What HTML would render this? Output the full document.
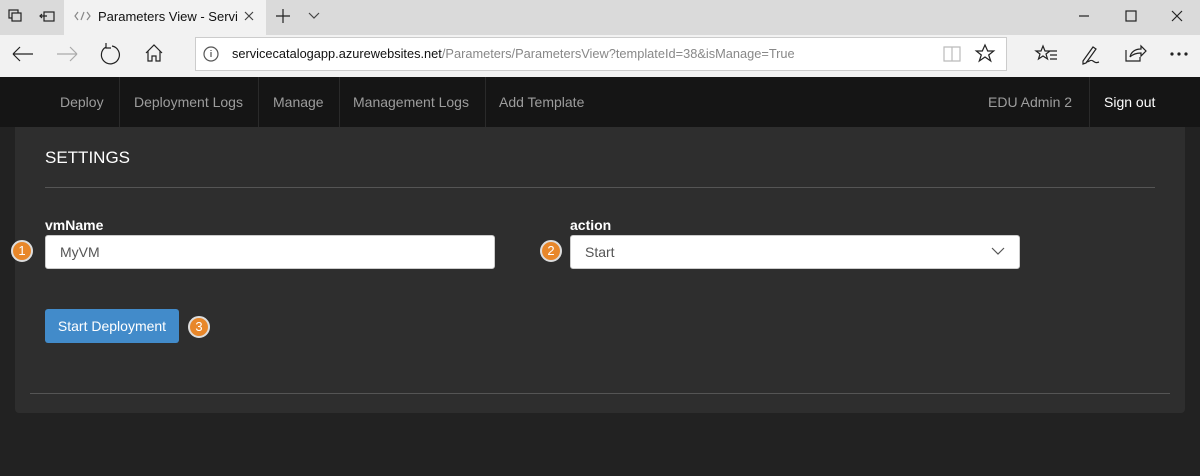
<!DOCTYPE html>
<html><head><style>
*{margin:0;padding:0;box-sizing:border-box}
body{width:1200px;height:476px;overflow:hidden;background:#222;font-family:"Liberation Sans",Arial,sans-serif;position:relative}
.abs{position:absolute}
.tabbar{left:0;top:0;width:1200px;height:35px;background:#dadada}
.tab{left:64px;top:0;width:202px;height:35px;background:#f2f2f2}
.toolbar{left:0;top:35px;width:1200px;height:42px;background:#f2f2f2}
.addr{left:195px;top:37px;width:812px;height:34px;background:#fff;border:1px solid #ccc}
.nav{left:0;top:77px;width:1200px;height:50px;background:#151515}
.nav span{position:absolute;top:0;height:50px;line-height:50px;font-size:14px;color:#9d9d9d}
.sep{position:absolute;top:0;width:1px;height:50px;background:#2a2a2a}
.panel{left:15px;top:127px;width:1170px;height:286px;background:#2e2e2e;border-radius:0 0 4px 4px}
.lbl{font-size:14px;font-weight:bold;color:#fff}
.inp{background:#fff;border:1px solid #ccc;border-radius:3px;height:34px;font-size:14px;color:#555;line-height:32px;padding-left:14px}
.badge{width:22px;height:22px;border-radius:50%;background:#e8872a;border:2px solid #ddd;color:#fff;font-size:13px;text-align:center;line-height:18px}
</style></head><body>
<div class="abs tabbar"></div>
<div class="abs tab"></div>
<div class="abs toolbar"></div>
<div class="abs addr"></div>
<svg class="abs" style="left:0;top:0" width="1200" height="77" fill="none" stroke="#222" stroke-width="1.2">
<rect x="9" y="10" width="9" height="8"/><rect x="12" y="13" width="9" height="8" fill="#dadada"/>
<rect x="44" y="12" width="10" height="9"/><path d="M40 16h7M42 14l-2 2 2 2"/>
<path d="M78 12l-3 4 3 4M84 12l-3 8M87 12l3 4-3 4" stroke="#888"/>
<path d="M245 12l8 8M253 12l-8 8" stroke="#444"/>
<path d="M283 9v14M276 16h14"/><path d="M309 13l5 5 5-5" stroke="#444"/>
<path d="M1079 16h10"/><rect x="1126" y="11" width="10" height="10"/><path d="M1172 11l10 10M1182 11l-10 10"/>
<path d="M13 54h20M13 54l7-7M13 54l7 7"/>
<path d="M57 54h20M77 54l-7-7M77 54l-7 7" stroke="#aaa"/>
<path d="M106 47a9 9 0 1 0 6 -1M106 43v5h5"/>
<path d="M146 53l8-8 8 8M148 51v10h4v-5h4v5h4v-10"/>
<circle cx="211" cy="54" r="7" stroke="#555"/><path d="M211 52v5M211 50v1" stroke="#555"/>
<path d="M944 47h8v14h-8zM952 47h8v14h-8z" stroke="#bbb"/>
<path d="M985 45l2.7 6h6l-5 4 2 6-5.7-4-5.7 4 2-6-5-4h6z"/>
<path d="M1043 46l2 5h5l-4 3 1.5 5-4.5-3-4.5 3 1.5-5-4-3h5zM1050 51h7M1050 55h7M1050 59h7"/>
<path d="M1083 61l10-14 3 2-10 14-3 1zM1086 62c4 0 4-3 7-1s3 2 6 1"/>
<path d="M1126 50v11h14v-4M1130 57c1-5 5-8 11-8v-3l5 5-5 5v-3c-5 0-8 1-11 4"/>
<circle cx="1172" cy="54" r="1" fill="#222"/><circle cx="1179" cy="54" r="1" fill="#222"/><circle cx="1186" cy="54" r="1" fill="#222"/>
</svg>
<div class="abs" style="left:98px;top:9px;font-size:13px;color:#111">Parameters View - Servi</div>
<div class="abs" style="left:232px;top:46px;font-size:12.8px;color:#111">servicecatalogapp.azurewebsites.net<span style="color:#888">/Parameters/ParametersView?templateId=38&amp;isManage=True</span></div>
<div class="abs nav">
<span style="left:60px">Deploy</span><div class="sep" style="left:119px"></div>
<span style="left:134px">Deployment Logs</span><div class="sep" style="left:258px"></div>
<span style="left:273px">Manage</span><div class="sep" style="left:339px"></div>
<span style="left:353px">Management Logs</span><div class="sep" style="left:485px"></div>
<span style="left:499px">Add Template</span>
<span style="left:988px">EDU Admin 2</span><div class="sep" style="left:1089px"></div>
<span style="left:1104px;color:#fff">Sign out</span>
</div>
<div class="abs panel"></div>
<div class="abs" style="left:45px;top:148px;font-size:17px;color:#fff">SETTINGS</div>
<div class="abs" style="left:45px;top:187px;width:1110px;height:1px;background:#555"></div>
<div class="abs lbl" style="left:45px;top:217px">vmName</div>
<div class="abs inp" style="left:45px;top:235px;width:450px">MyVM</div>
<div class="abs badge" style="left:11px;top:240px">1</div>
<div class="abs lbl" style="left:570px;top:217px">action</div>
<div class="abs inp" style="left:570px;top:235px;width:450px">Start</div>
<svg class="abs" style="left:990px;top:246px" width="16" height="10"><path d="M2 2l6 6 6-6" fill="none" stroke="#555" stroke-width="1.2"/></svg>
<div class="abs badge" style="left:540px;top:240px">2</div>
<div class="abs" style="left:45px;top:309px;width:134px;height:34px;background:#428bca;border-radius:3px;color:#fff;font-size:14px;line-height:34px;text-align:center">Start Deployment</div>
<div class="abs badge" style="left:188px;top:316px">3</div>
<div class="abs" style="left:30px;top:393px;width:1140px;height:1px;background:#555"></div>
</body></html>
